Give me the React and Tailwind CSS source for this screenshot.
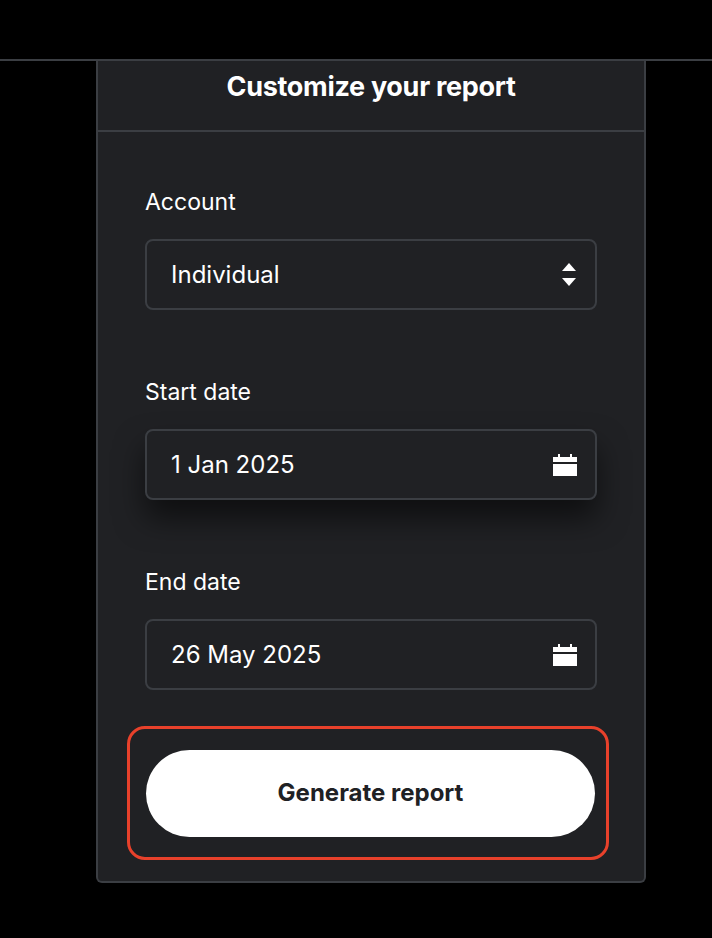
const font = { fontFamily: 'Inter, "Noto Sans", sans-serif' };

function Calendar() {
  return (
    <svg width="24" height="24" viewBox="0 0 24 24" fill="white">
      <rect x="5" y="1" width="2" height="4" />
      <rect x="17" y="1" width="2" height="4" />
      <rect x="0" y="4" width="24" height="5" />
      <rect x="0" y="11" width="24" height="12" />
    </svg>
  );
}

function Sort() {
  return (
    <svg width="16" height="26" viewBox="0 0 16 26" fill="white">
      <path d="M8 1 L15 9 H1 Z" />
      <path d="M1 16 H15 L8 24 Z" />
    </svg>
  );
}

function Field({ label, value, icon, shadow }) {
  return (
    <div>
      <div className="text-[23px] text-white leading-none mb-[25px]">{label}</div>
      <div
        className={`h-[71px] rounded-[8px] border-2 border-[#3b3e43] bg-[#202124] flex items-center justify-between pl-[24px] pr-[18px] ${shadow ? 'shadow-[0_18px_30px_rgba(0,0,0,0.55)]' : ''}`}
      >
        <span className="text-[24px] text-white">{value}</span>
        {icon}
      </div>
    </div>
  );
}

export default function App() {
  return (
    <div className="w-[712px] h-[938px] bg-black overflow-hidden" style={font}>
      <div className="h-[61px] border-b-2 border-[#3b3e43]" />
      <div className="ml-[96px] w-[550px] h-[822px] bg-[#202124] border-x-2 border-b-2 border-[#3b3e43] rounded-b-[6px] flex flex-col">
        <div className="h-[71px] border-b-2 border-[#3b3e43] flex justify-center pt-[6px]">
          <h2 className="text-[27px] font-bold text-white tracking-[-0.3px]">Customize your report</h2>
        </div>
        <div className="px-[47px] pt-[59px] flex flex-col gap-[71px]">
          <Field label="Account" value="Individual" icon={<Sort />} />
          <Field label="Start date" value="1 Jan 2025" icon={<Calendar />} shadow />
          <Field label="End date" value="26 May 2025" icon={<Calendar />} />
        </div>
        <div className="ml-[29px] mr-[35px] mt-[36px] h-[134px] rounded-[18px] border-[3px] border-[#e8412b] flex items-center pl-[16px] pr-[11px]">
          <button className="w-full h-[87px] rounded-full bg-white text-[#202124] text-[24px] font-bold">
            Generate report
          </button>
        </div>
      </div>
    </div>
  );
}
